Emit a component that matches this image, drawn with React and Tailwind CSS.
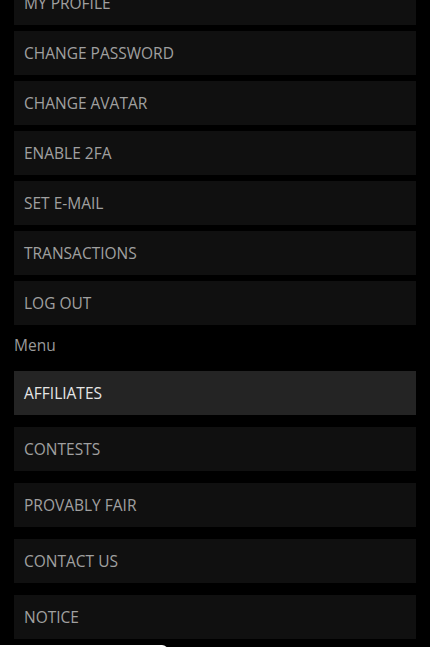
import React from "react";

const accountLinks = [
  "MY PROFILE",
  "CHANGE PASSWORD",
  "CHANGE AVATAR",
  "ENABLE 2FA",
  "SET E-MAIL",
  "TRANSACTIONS",
  "LOG OUT",
];

const menuLinks = ["AFFILIATES", "CONTESTS", "PROVABLY FAIR", "CONTACT US", "NOTICE"];

const NavItem = ({ label, active }) => (
  <a
    href="#"
    className={`flex h-[44px] items-center px-[10px] pt-[1px] text-[15.5px] ${
      active ? "bg-[#242424] text-[#e6e6e6]" : "bg-[#101010] text-[#a0a0a0]"
    }`}
  >
    {label}
  </a>
);

export default function App() {
  return (
    <div
      className="relative h-[647px] overflow-hidden bg-black"
      style={{ fontFamily: '"Open Sans", "Noto Sans", sans-serif' }}
    >
      <div className="-mt-[19px] px-[14px]">
        <div className="flex flex-col gap-[6px]">
          {accountLinks.map((l) => (
            <NavItem key={l} label={l} />
          ))}
        </div>
        <div className="mt-[10px] mb-[16px] text-[15.5px] leading-[20px] text-[#9a9a9a]">Menu</div>
        <div className="flex flex-col gap-[12px]">
          {menuLinks.map((l, i) => (
            <NavItem key={l} label={l} active={i === 0} />
          ))}
        </div>
      </div>
      <div className="absolute bottom-[-20px] left-0 h-[22px] w-[168px] rounded-tr-[6px] bg-white" />
    </div>
  );
}
